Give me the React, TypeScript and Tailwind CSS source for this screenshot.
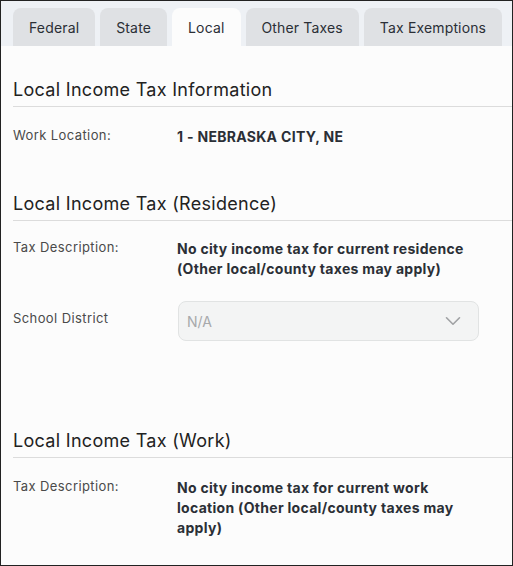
import React from 'react';
import { ChevronDown } from 'lucide-react';

const tabs = ['Federal', 'State', 'Local', 'Other Taxes', 'Tax Exemptions'];

function Section({ title, className, children }: { title: string; className?: string; children: React.ReactNode }) {
  return (
    <div className={className}>
      <h2 className="border-b border-[#dcdcdc] pb-[5px] text-[18px] leading-[22px] font-normal tracking-[0.3px] text-[#222]">
        {title}
      </h2>
      {children}
    </div>
  );
}

function Row({ label, children, className }: { label: string; children: React.ReactNode; className?: string }) {
  return (
    <div className={'flex items-start ' + (className ?? '')}>
      <div className="w-[164px] shrink-0 text-[13px] leading-[16px] tracking-[0.4px] text-[#4a4a4a]">{label}</div>
      <div className="flex-1">{children}</div>
    </div>
  );
}

export default function App() {
  return (
    <div
      className="h-[566px] w-[513px] overflow-hidden border border-[#222] bg-[#fcfcfc]"
      style={{ fontFamily: 'Inter, "Noto Sans", sans-serif' }}
    >
      {/* Tabs */}
      <div className="flex h-[45px] items-end gap-[5px] bg-[#eef1f5] pl-[12px]">
        {tabs.map((t) => (
          <div
            key={t}
            className={
              'flex h-[38px] items-center rounded-t-[8px] px-[16px] text-[14px] tracking-[0.15px] text-[#2b2f36] ' +
              (t === 'Local' ? 'bg-[#fcfcfc]' : 'bg-[#dfe1e4]')
            }
          >
            {t}
          </div>
        ))}
      </div>

      <div className="pl-[12px] pt-[33px]">
        <Section title="Local Income Tax Information">
          <Row label="Work Location:" className="mt-[20px]">
            <div className="text-[14px] leading-[20px] font-bold tracking-[0.3px] text-[#2b2f36]">1 - NEBRASKA CITY, NE</div>
          </Row>
        </Section>

        <Section title="Local Income Tax (Residence)" className="mt-[46px]">
          <Row label="Tax Description:" className="mt-[18px]">
            <div className="text-[14px] leading-[20px] font-bold tracking-[0.3px] text-[#2b2f36]">
              No city income tax for current residence
              <br />
              (Other local/county taxes may apply)
            </div>
          </Row>
          <div className="mt-[22px] flex items-start">
            <div className="w-[165px] shrink-0 pt-[9px] text-[13px] leading-[16px] tracking-[0.4px] text-[#4a4a4a]">
              School District
            </div>
            <div className="flex h-[40px] w-[301px] items-center justify-between rounded-[8px] border border-[#e1e3e3] bg-[#f3f4f4] pl-[8px] pr-[12px] text-[14px] text-[#a7a9ab]">
              <span>N/A</span>
              <ChevronDown size={26} strokeWidth={1.5} className="text-[#a0a2a4]" />
            </div>
          </div>
        </Section>

        <Section title="Local Income Tax (Work)" className="mt-[89px]">
          <Row label="Tax Description:" className="mt-[20px]">
            <div className="w-[300px] text-[14px] leading-[20px] font-bold tracking-[0.3px] text-[#2b2f36]">
              No city income tax for current work location (Other local/county taxes may apply)
            </div>
          </Row>
        </Section>
      </div>
    </div>
  );
}
